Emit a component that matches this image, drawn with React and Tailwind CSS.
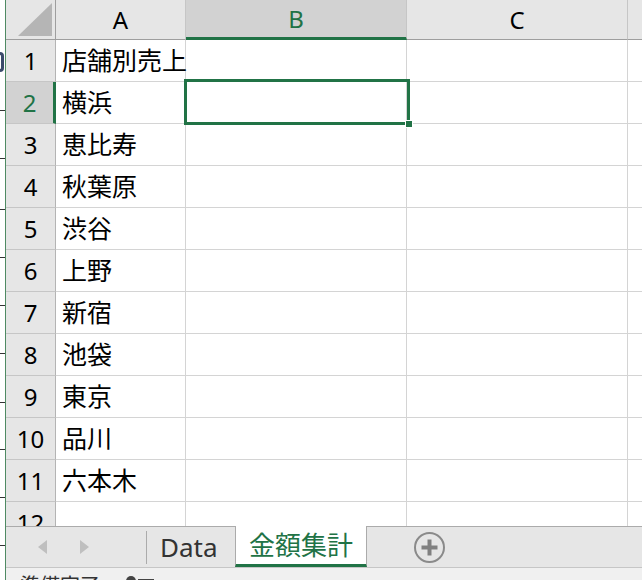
import React from 'react';

const ROWS = ['店舗別売上', '横浜', '恵比寿', '秋葉原', '渋谷', '上野', '新宿', '池袋', '東京', '品川', '六本木'];
const TICKS = [110, 158, 209, 257, 305, 353, 402, 449, 497, 545];

const font = { fontFamily: '"Noto Sans CJK JP", "Noto Sans", sans-serif' };

function ColHeader({ label, width, active }) {
  return (
    <div
      className={`flex h-[40px] shrink-0 items-center justify-center border-r border-[#c6c6c6] text-[24px] ${
        active ? 'border-b-[3px] border-b-[#217346] bg-[#d2d2d2] text-[#217346]' : 'border-b border-b-[#9e9e9e] bg-[#e6e6e6] text-black'
      }`}
      style={{ width }}
    >
      <span className="leading-none" style={{ fontFamily: '"Noto Sans", sans-serif' }}>{label}</span>
    </div>
  );
}

function Row({ n, text }) {
  const active = n === 2;
  return (
    <div className="flex h-[42px] shrink-0">
      <div
        className={`flex w-[50px] shrink-0 items-center justify-center border-b border-[#c6c6c6] text-[24px] ${
          active ? 'border-r-[3px] border-r-[#217346] bg-[#d2d2d2] text-[#217346]' : 'border-r border-r-[#b4b4b4] bg-[#e6e6e6] text-black'
        }`}
        style={{ fontFamily: '"Noto Sans", sans-serif' }}
      >
        {n}
      </div>
      <div className="flex w-[130px] shrink-0 items-center overflow-visible whitespace-nowrap border-b border-r border-[#d4d4d4] pb-[3px] pl-[6px] text-[25px] text-black">
        <span className="relative z-10 leading-none">{text}</span>
      </div>
      <div className="w-[221px] shrink-0 border-b border-r border-[#d4d4d4]" />
      <div className="w-[221px] shrink-0 border-b border-r border-[#d4d4d4]" />
      <div className="flex-1 border-b border-[#d4d4d4]" />
    </div>
  );
}

export default function App() {
  return (
    <div className="relative flex h-[580px] w-[642px] overflow-hidden bg-white" style={font}>
      {/* window behind */}
      <div className="relative w-[5px] shrink-0 bg-white">
        <div className="absolute left-[-4px] top-[52px] h-[20px] w-[8px] rounded-sm border-[3px] border-[#3b4a6b]" />
        {TICKS.map(t => (
          <div key={t} className="absolute left-0 h-px w-[5px] bg-[#333]" style={{ top: t }} />
        ))}
      </div>
      <div className="w-px shrink-0 bg-[#4f8a63]" />

      <div className="flex min-w-0 flex-1 flex-col">
        {/* grid */}
        <div className="relative h-[526px] shrink-0 overflow-hidden">
          <div className="flex">
            <div className="relative h-[40px] w-[50px] shrink-0 border-b border-r border-[#9e9e9e] bg-[#e6e6e6]">
              <svg className="absolute left-[12px] top-[3px]" width="34" height="33" viewBox="0 0 34 33">
                <polygon points="34,0 34,33 0,33" fill="#b5b5b5" />
              </svg>
            </div>
            <ColHeader label="A" width={130} />
            <ColHeader label="B" width={221} active />
            <ColHeader label="C" width={221} />
            <div className="h-[40px] flex-1 border-b border-[#9e9e9e] bg-[#e6e6e6]" />
          </div>
          {ROWS.map((t, i) => (
            <Row key={i} n={i + 1} text={t} />
          ))}
          <Row n={12} text="" />

          {/* selection B2 */}
          <div className="absolute left-[178px] top-[79px] h-[46px] w-[226px] border-[3px] border-[#217346]">
            <div className="absolute bottom-[-6px] right-[-6px] h-[8px] w-[8px] border border-white bg-[#217346]" />
          </div>
        </div>

        {/* sheet tabs */}
        <div className="flex h-[41px] shrink-0 bg-[#e6e6e6]">
          <div className="flex w-[140px] shrink-0 items-center border-t border-[#ababab]">
            <svg className="ml-[32px]" width="9" height="14" viewBox="0 0 9 14">
              <polygon points="9,0 9,14 0,7" fill="#bfbfbf" />
            </svg>
            <svg className="ml-[33px]" width="9" height="14" viewBox="0 0 9 14">
              <polygon points="0,0 0,14 9,7" fill="#bfbfbf" />
            </svg>
          </div>
          <div className="flex w-[89px] shrink-0 items-center border-t border-[#ababab]">
            <div className="h-[33px] w-px bg-[#ababab]" />
            <span className="ml-[13px] text-[26px] leading-none text-[#333]" style={{ fontFamily: '"Noto Sans", sans-serif' }}>Data</span>
          </div>
          <div className="flex w-[132px] shrink-0 items-center justify-center border-b-[3px] border-x border-x-[#ababab] border-b-[#217346] bg-white pb-[2px]">
            <span className="text-[26px] leading-none text-[#217346]">金額集計</span>
          </div>
          <div className="flex flex-1 items-center border-t border-[#ababab]">
            <svg className="ml-[46px]" width="33" height="33" viewBox="0 0 33 33">
              <circle cx="16.5" cy="16.5" r="14.5" fill="none" stroke="#8a8a8a" strokeWidth="2" />
              <rect x="8.5" y="14.5" width="16" height="4" fill="#808080" />
              <rect x="14.5" y="8.5" width="4" height="16" fill="#808080" />
            </svg>
          </div>
        </div>

        {/* status bar */}
        <div className="flex flex-1 items-start gap-[26px] border-t border-[#c6c6c6] bg-[#f0f0f0] pl-[14px] pt-[7px]">
          <span className="text-[20px] leading-none text-[#333]">準備完了</span>
          <div className="mt-[1px] flex items-center gap-[2px]">
            <div className="h-[10px] w-[10px] rounded-full bg-[#444]" />
            <div className="h-[4px] w-[16px] bg-[#444]" />
          </div>
        </div>
      </div>
    </div>
  );
}
